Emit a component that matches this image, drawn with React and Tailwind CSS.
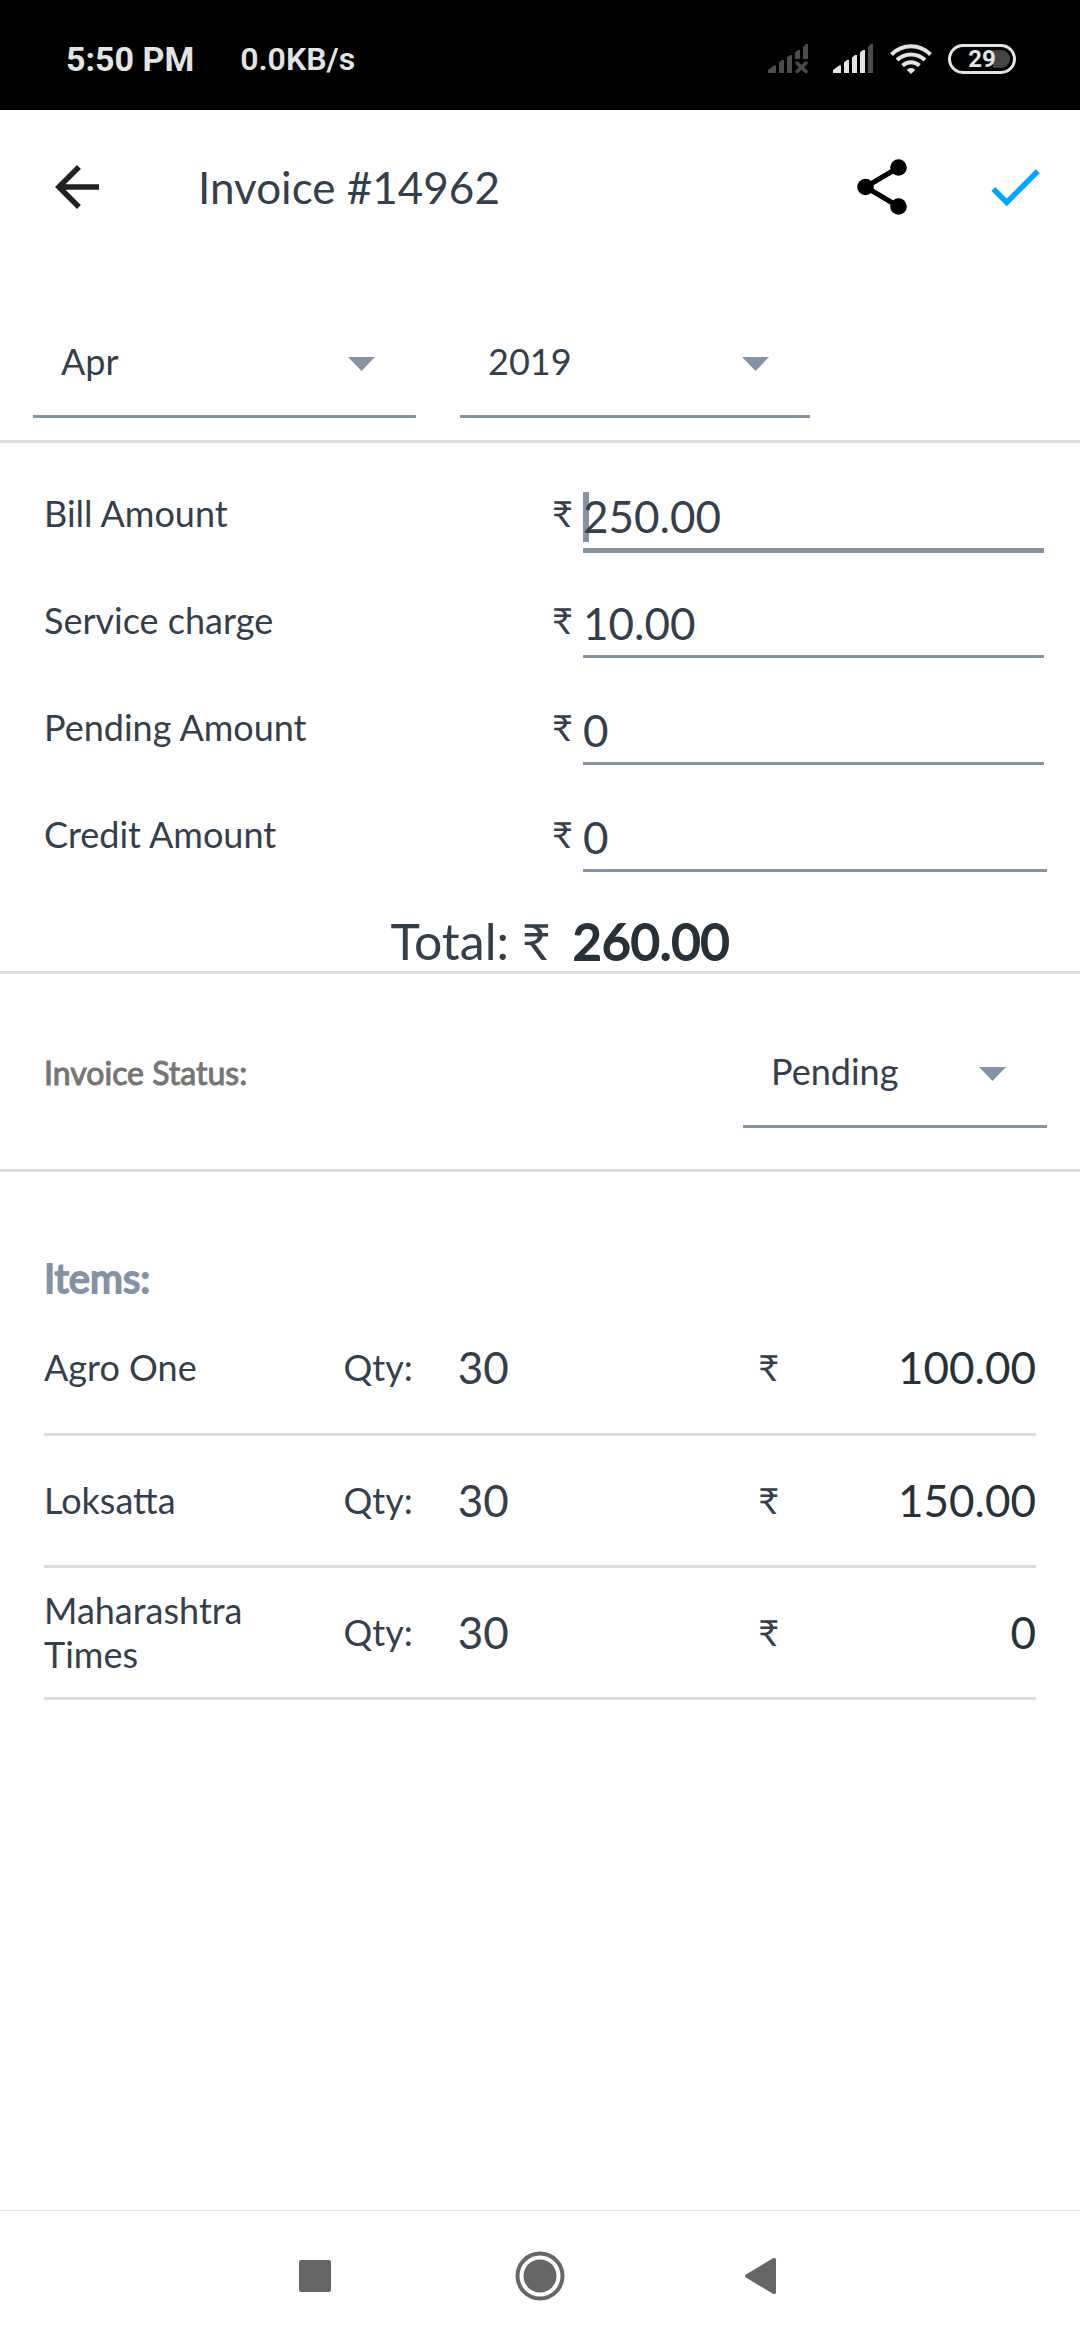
import { useState } from "react";

const FIELDS = [
  { id: "bill", label: "Bill Amount", value: "250.00", active: true },
  { id: "service", label: "Service charge", value: "10.00" },
  { id: "pending", label: "Pending Amount", value: "0" },
  { id: "credit", label: "Credit Amount", value: "0", last: true },
];

const ITEMS = [
  { name: "Agro One", qty: 30, amount: "100.00" },
  { name: "Loksatta", qty: 30, amount: "150.00" },
  { name: "Maharashtra Times", qty: 30, amount: "0" },
];

const MONTHS = ["Jan", "Feb", "Mar", "Apr", "May", "Jun", "Jul", "Aug", "Sep", "Oct", "Nov", "Dec"];

function StatusBar() {
  return (
    <div className="flex h-[110px] items-center bg-black pt-2 pr-16 pl-[66px] font-['Roboto',sans-serif] text-[#e4e4e4]">
      <span className="text-[34px] leading-10 font-bold">5:50 PM</span>
      <span className="ml-[46px] text-[32px] leading-10 font-semibold">0.0KB/s</span>
      <div className="ml-auto flex items-center gap-4">
        <svg width="41" height="30" viewBox="0 0 41 30" fill="#4c4c4c" className="mr-2" aria-label="No signal">
          <path d="M0 29V26L6 21.500H8V29ZM11 29V18.500L14 16H16V29ZM19 29V13.500L22 11H24V29ZM27 15V8.500L30 6H32V15ZM35 15V3L38 0H40V15Z" />
          <path d="M29 19L38 27.500M38 19L29 27.500" stroke="#4c4c4c" strokeWidth="3.500" strokeLinecap="round" />
        </svg>
        <svg width="41" height="30" viewBox="0 0 41 30" fill="#e4e4e4" aria-label="Signal">
          <path d="M0 29V26L6 21.500H8V29ZM11 29V18.500L14 16H16V29ZM19 29V13.500L22 11H24V29ZM27 29V8.500L30 6H32V29Z" />
          <path d="M35 29V3L38 0H40V29Z" fill="#4c4c4c" />
        </svg>
        <svg width="42" height="30" viewBox="0 0 42 30" fill="none" stroke="#e4e4e4" strokeWidth="4" aria-label="Wi-Fi">
          <path d="M1.500 10.500C12.500 -0.500 29.500 -0.500 40.500 10.500" />
          <path d="M7 16C15 8.500 27 8.500 35 16" />
          <path d="M12.500 21.500C17.500 17 24.500 17 29.500 21.500" />
          <path d="M21 24C18.500 24 17 25.200 17 26.200L21 30L25 26.200C25 25.200 23.500 24 21 24Z" fill="#e4e4e4" stroke="none" />
        </svg>
        <div className="relative flex h-[30px] w-[68px] items-center justify-center rounded-full border-3 border-[#e4e4e4]">
          <span className="absolute top-[3px] right-[3px] h-[18px] w-[17px] rounded-r-full bg-[#444444]" />
          <span className="relative text-2xl leading-6 font-bold">29</span>
        </div>
      </div>
    </div>
  );
}

function AppBar() {
  return (
    <header className="flex h-[154px] items-center pr-8 pl-11">
      <button type="button" aria-label="Back">
        <svg width="66" height="66" viewBox="0 0 24 24" fill="#212121">
          <path d="M20 11H7.830l5.590-5.590L12 4l-8 8 8 8 1.410-1.410L7.830 13H20v-2z" />
        </svg>
      </button>
      <h1 className="ml-[88px] text-[44px] leading-[53px]">Invoice #14962</h1>
      <button type="button" aria-label="Share" className="ml-auto">
        <svg width="50" height="56" viewBox="0 0 50 56" fill="#000">
          <path d="M41.500 8.500L8.500 28L41.500 47.500" fill="none" stroke="#000" strokeWidth="5" />
          <circle cx="41.500" cy="8.500" r="8.300" />
          <circle cx="8.500" cy="28" r="8.300" />
          <circle cx="41.500" cy="47.500" r="8.300" />
        </svg>
      </button>
      <button type="button" aria-label="Save" className="ml-[75px]">
        <svg width="66" height="66" viewBox="0 0 24 24" fill="#03a5ff">
          <path d="M9 16.170L4.830 12l-1.420 1.410L9 19 21 7l-1.410-1.410z" />
        </svg>
      </button>
    </header>
  );
}

function Dropdown({ label, id, options, initial }) {
  const [value, setValue] = useState(initial);
  return (
    <div className="grid w-full items-center border-b-3 border-[#8492a6]">
      <select
        id={id}
        aria-label={label}
        value={value}
        onChange={(e) => setValue(e.target.value)}
        className="col-start-1 row-start-1 h-[108px] w-full appearance-none bg-transparent pl-7 text-[36px] leading-11 outline-none"
      >
        {options.map((o) => (
          <option key={o}>{o}</option>
        ))}
      </select>
      <svg width="27" height="20" viewBox="0 0 27 20" fill="#8492a6" className="pointer-events-none col-start-1 row-start-1 mr-[41px] justify-self-end" aria-hidden="true">
        <path d="M0 6H27L13.500 20Z" />
      </svg>
    </div>
  );
}

function AmountField({ field }) {
  const [value, setValue] = useState(field.value);
  const underline = field.active ? "border-b-5" : "border-b-3";
  const reach = field.last ? "-mr-[3px]" : "";
  return (
    <div className="grid h-[107px] grid-cols-[508fr_492fr] items-start pt-1.5">
      <label htmlFor={field.id} className="text-[36px] leading-[46px]">
        {field.label}
      </label>
      <div className={`flex items-start ${reach}`}>
        <span className="w-[31px] shrink-0 text-[36px] leading-[46px]">₹</span>
        <div className={`relative min-w-0 flex-1 border-[#8492a6] pb-[5px] ${underline}`}>
          {field.active && <span className="absolute top-0.5 left-0 h-[50px] w-1.5 bg-[#8492a6]" />}
          <input
            id={field.id}
            inputMode="decimal"
            value={value}
            onChange={(e) => setValue(e.target.value)}
            className="relative block h-[53px] w-full bg-transparent text-[44px] leading-[53px] outline-none"
          />
        </div>
      </div>
    </div>
  );
}

function ItemTable() {
  return (
    <table className="w-full table-fixed border-collapse text-left">
      <colgroup>
        <col className="w-[30.2%]" />
        <col className="w-[11.5%]" />
        <col className="w-[30.3%]" />
        <col />
        <col className="w-[20%]" />
      </colgroup>
      <tbody>
        {ITEMS.map((item) => (
          <tr key={item.name} className="h-[132px] border-b-3 border-[#dcdcdc]">
            <th scope="row" className="pr-16 text-[36px] leading-11 font-normal">
              {item.name}
            </th>
            <td className="text-[36px] leading-11">Qty:</td>
            <td className="text-[44px] leading-[53px]">{item.qty}</td>
            <td className="text-[36px] leading-11">₹</td>
            <td className="text-right text-[44px] leading-[53px] text-[#263238]">{item.amount}</td>
          </tr>
        ))}
      </tbody>
    </table>
  );
}

function NavBar() {
  return (
    <nav className="flex h-[130px] items-center justify-center gap-44 border-t border-[#e2e2e2]">
      <button type="button" aria-label="Recent apps">
        <svg width="48" height="50" viewBox="0 0 48 50" fill="#666666">
          <rect x="8" y="9" width="32" height="32" rx="2" />
        </svg>
      </button>
      <button type="button" aria-label="Home">
        <svg width="50" height="50" viewBox="0 0 50 50" fill="#666666">
          <circle cx="25" cy="25" r="22.500" fill="none" stroke="#666666" strokeWidth="4" />
          <circle cx="25" cy="25" r="16.500" />
        </svg>
      </button>
      <button type="button" aria-label="Back">
        <svg width="48" height="50" viewBox="0 0 48 50" fill="#666666">
          <path d="M4.800 23.400L32 7.300Q34.500 6 35 8.500V41.500Q34.500 44 32 42.700L4.800 26.600Q3 25 4.800 23.400Z" />
        </svg>
      </button>
    </nav>
  );
}

export default function App() {
  return (
    <div className="flex min-h-screen flex-col bg-white font-['Lato',sans-serif] text-[#343f4b]">
      <StatusBar />
      <AppBar />
      <main className="flex-1">
        <section className="grid grid-cols-[383fr_350fr_193fr] gap-11 border-b-3 border-[#dcdcdc] px-[33px] pt-[43px] pb-[22px]">
          <Dropdown id="month" label="Month" options={MONTHS} initial="Apr" />
          <Dropdown id="year" label="Year" options={["2018", "2019", "2020"]} initial="2019" />
        </section>

        <section className="border-b-3 border-[#dcdcdc] pt-[41px]">
          <div className="pr-9 pl-11">
            {FIELDS.map((f) => (
              <AmountField key={f.id} field={f} />
            ))}
          </div>
          <p className="flex justify-center gap-[22px] pl-10 text-[50px] leading-[59px]">
            <span>Total: ₹</span>
            <span className="text-[#263238] [-webkit-text-stroke:2px]">260.00</span>
          </p>
        </section>

        <section className="flex items-center justify-between border-b-3 border-[#dcdcdc] pt-[43px] pr-[33px] pb-[41px] pl-11">
          <label htmlFor="status" className="text-[32px] leading-10 text-[#757575] [-webkit-text-stroke:1px]">
            Invoice Status:
          </label>
          <div className="w-[304px]">
            <Dropdown id="status" label="Invoice Status" options={["Pending", "Paid"]} initial="Pending" />
          </div>
        </section>

        <section className="px-11 pt-[83px]">
          <h2 className="text-[40px] leading-[47px] text-[#8492a6] [-webkit-text-stroke:2px]">Items:</h2>
          <ItemTable />
        </section>
      </main>
      <NavBar />
    </div>
  );
}
